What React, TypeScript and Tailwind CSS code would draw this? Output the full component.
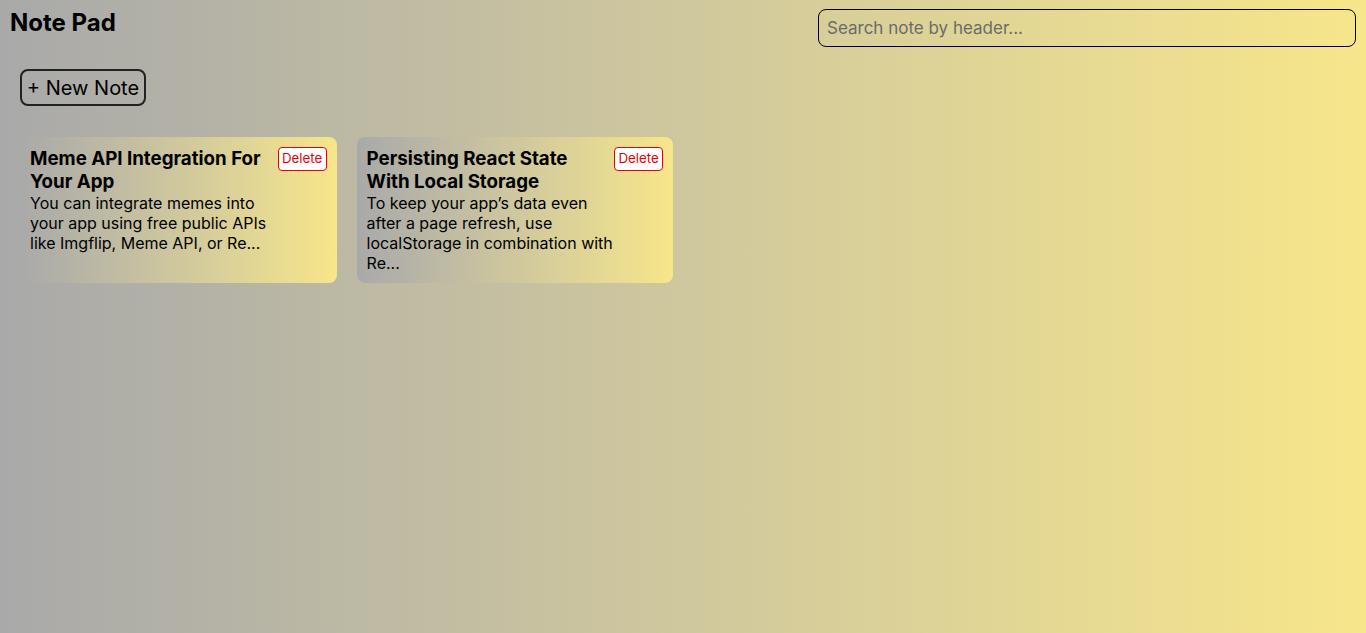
import React from "react";

const notes = [
  {
    title: "Meme API Integration For Your App",
    body: "You can integrate memes into your app using free public APIs like Imgflip, Meme API, or Re...",
  },
  {
    title: "Persisting React State With Local Storage",
    body: "To keep your app’s data even after a page refresh, use localStorage in combination with Re...",
  },
];

export default function App() {
  return (
    <div
      className="min-h-[633px] w-full bg-gradient-to-r from-[#a9a9a9] to-[#f7e68a] text-black"
      style={{ fontFamily: "Inter, 'Noto Sans', sans-serif" }}
    >
      <div className="flex items-start justify-between pl-[10px] pr-[10px] pt-[9px]">
        <h1 className="mt-[1px] text-[24px] font-bold leading-[26px]">Note Pad</h1>
        <input
          className="h-[38px] w-[538px] rounded-lg border border-black bg-transparent px-[8px] text-[17px] text-black placeholder:text-[#6b6b6b] outline-none"
          placeholder="Search note by header..."
        />
      </div>
      <div className="pl-[20px] pt-[22px]">
        <button className="h-[37px] w-[126px] rounded-lg border-2 border-[#222] bg-transparent text-[20px] leading-[24px]">
          + New Note
        </button>
      </div>
      <div className="flex gap-[20px] pl-[20px] pt-[31px]">
        {notes.map((n) => (
          <div
            key={n.title}
            className="flex h-[146px] w-[316.6px] items-start rounded-lg bg-gradient-to-r from-[#a9a9a9] to-[#f7e68a] p-[10px]"
          >
            <div className="flex-1">
              <div className="text-[18.72px] font-bold leading-[23px]">{n.title}</div>
              <div className="text-[16px] leading-[20px]">{n.body}</div>
            </div>
            <button className="h-[24px] w-[49px] shrink-0 rounded-[4px] border border-red-600 bg-white text-[13.33px] text-red-600">
              Delete
            </button>
          </div>
        ))}
      </div>
    </div>
  );
}
